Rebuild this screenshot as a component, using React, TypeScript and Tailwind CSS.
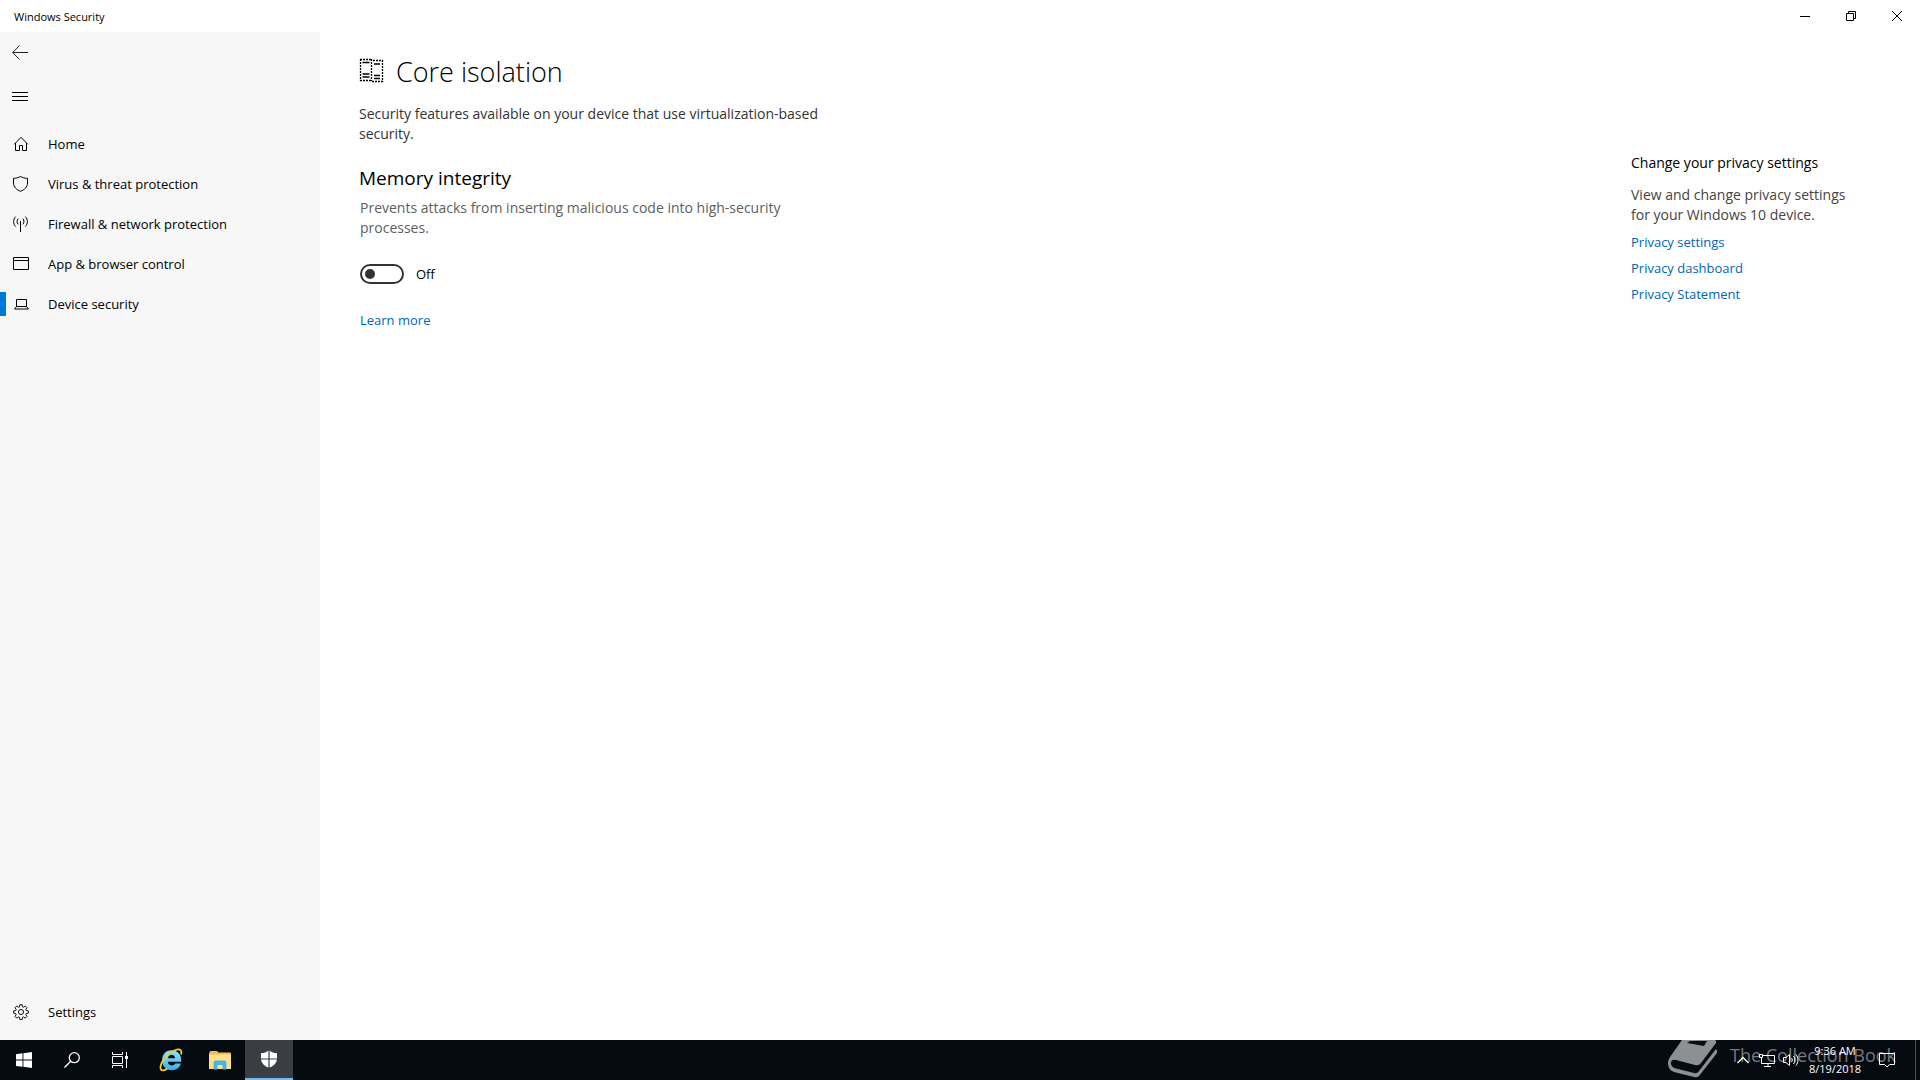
import React, { useState } from "react";

function BackIcon() {
  return (
    <svg width="16" height="16" viewBox="0 0 16 16" fill="none" stroke="#222" aria-hidden="true">
      <path d="M16 8.500H.8M7.500 1.500L.7 8.500l6.800 7" />
    </svg>
  );
}

function MenuIcon() {
  return (
    <svg width="16" height="16" viewBox="0 0 16 16" fill="#000" shapeRendering="crispEdges" aria-hidden="true">
      <path d="M0 4h16v1H0zM0 8h16v1H0zM0 12h16v1H0z" />
    </svg>
  );
}

function HomeIcon() {
  return (
    <svg width="16" height="16" viewBox="0 0 16 16" fill="none" stroke="#000" aria-hidden="true">
      <path d="M1.200 8.300L8 1.400l6.800 6.900M2.500 7.200v7.300h4v-5h3v5h4V7.200" />
    </svg>
  );
}

function ShieldIcon() {
  return (
    <svg width="16" height="16" viewBox="0 0 16 16" fill="none" stroke="#000" aria-hidden="true">
      <path d="M.5 2.300C3.500 2.300 5.500 1.500 7.500.5c2 1 4 1.800 7 1.800V7c0 4-3 6.800-7 8.300C3.500 13.800.5 11 .5 7z" />
    </svg>
  );
}

function SignalIcon() {
  return (
    <svg width="16" height="16" viewBox="0 0 16 16" fill="none" stroke="#000" aria-hidden="true">
      <path d="M7.500 5v11" />
      <path d="M5.200 2.600c-1.500 1.600-1.500 4.200 0 5.800M9.800 2.600c1.500 1.600 1.500 4.200 0 5.800M2.700.6c-2.800 2.800-2.800 7.200 0 10M12.300.6c2.800 2.800 2.800 7.200 0 10" />
    </svg>
  );
}

function WindowIcon() {
  return (
    <svg width="16" height="16" viewBox="0 0 16 16" fill="none" stroke="#000" aria-hidden="true">
      <path d="M.5 1.500h15v12H.5zM.5 4.500h15" />
    </svg>
  );
}

function LaptopIcon() {
  return (
    <svg width="16" height="16" viewBox="0 0 16 16" fill="none" stroke="#000" aria-hidden="true">
      <path d="M3.500 10.500v-7h10v7M3.500 10.500h10l2 2.500H1.500z" />
    </svg>
  );
}

function GearIcon() {
  return (
    <svg width="16" height="16" viewBox="0 0 17 17" fill="none" stroke="#000" strokeLinejoin="round" aria-hidden="true">
      <path d="M7.200.8h2.600l.3 2.200 1.200.5 1.800-1.300 1.800 1.800-1.300 1.800.5 1.200 2.200.3v2.500l-2.200.4-.5 1.200 1.300 1.800-1.800 1.800-1.800-1.300-1.200.5-.3 2.200H7.200l-.3-2.200-1.200-.5L3.900 15 2.100 13.200l1.300-1.800-.5-1.200L.7 9.800V7.300L2.900 7l.5-1.200L2.100 4l1.800-1.800 1.800 1.300L6.900 3z" />
      <circle cx="8.500" cy="8.500" r="2.700" />
    </svg>
  );
}

function CoreIsolationIcon() {
  return (
    <svg width="25" height="25" viewBox="0 0 25 25" fill="none" stroke="#000" className="mb-1 shrink-0" aria-hidden="true">
      <g strokeWidth="1.300" strokeDasharray="2 1">
        <path d="M1 1.500h12M1 22.500h12M1.500 1v22M12.500 1v22" />
        <path d="M14 2.500h10M13 23.500h11M23.500 2v22" />
      </g>
      <path d="M3.500 4.500h7M3.500 16h7M3.500 19h7M15 6h6M15 17.500h6M15 20.500h6" strokeWidth="1.600" />
    </svg>
  );
}

function StartIcon() {
  return (
    <svg width="16" height="16" viewBox="0 0 16 16" fill="#fff" aria-hidden="true">
      <path d="M0 2.200l6.500-.9v6.300H0zM7.400 1.200L16 0v7.600H7.400zM0 8.500h6.500v6.300L0 13.900zM7.400 8.500H16V16l-8.600-1.200z" />
    </svg>
  );
}

function SearchIcon() {
  return (
    <svg width="16" height="16" viewBox="0 0 16 16" fill="none" stroke="#fff" strokeWidth="1.300" aria-hidden="true">
      <circle cx="10.300" cy="5.700" r="5" />
      <path d="M6.700 9.300L.5 15.500" />
    </svg>
  );
}

function TaskViewIcon() {
  return (
    <svg width="16" height="16" viewBox="0 0 16 16" fill="none" stroke="#fff" aria-hidden="true">
      <path d="M.5 0v2.500h10V0M.5 16v-2.500h10V16M.5 4.500h10v7H.5zM14.500 0v16" />
      <path d="M13 4h3v3h-3z" fill="#fff" stroke="none" />
    </svg>
  );
}

function InternetExplorerIcon() {
  return (
    <svg width="24" height="24" viewBox="0 0 24 24" fill="none" aria-hidden="true">
      <defs>
        <linearGradient id="ie-blue" x1="0" y1="0" x2="0" y2="1">
          <stop offset="0" stopColor="#8fe3fb" />
          <stop offset="1" stopColor="#35b3ea" />
        </linearGradient>
      </defs>
      <path
        fillRule="evenodd"
        fill="url(#ie-blue)"
        d="M12.500 2.200c6 0 9.700 4.300 9.700 10v1.600H8.900c.3 2.500 1.700 3.700 3.900 3.700 1.700 0 2.800-.6 3.400-1.900h5.700c-1.200 4.100-4.600 6.700-9.200 6.700C7 22.300 3.100 18.300 3.100 12.300S7 2.200 12.500 2.200zM9 10.300h7.100c-.3-2.200-1.500-3.500-3.500-3.500S9.300 8.100 9 10.300z"
      />
      <path d="M22 6.500C23.300 2.700 21.400.8 17.800 1.600 12.500 2.800 5.500 9 2.800 14.600.6 19.200 1.200 22.800 4.300 22.400c1.300-.2 2.600-.8 4-1.700" stroke="#f3cd2c" strokeWidth="1.800" />
    </svg>
  );
}

function FolderIcon() {
  return (
    <svg width="22" height="20" viewBox="0 0 22 20" aria-hidden="true">
      <path d="M0 2.500h1V1h7l1.500 1.500H21a1 1 0 011 1V18H0z" fill="#efbf55" />
      <path d="M0 4.500h22V19H0z" fill="#fde08c" />
      <path d="M4.500 19.500v-7l1.500-2h10l1.500 2v7h-4V15h-5v4.500z" fill="#4db2dc" />
    </svg>
  );
}

function DefenderIcon() {
  return (
    <svg width="18" height="18" viewBox="0 0 18 18" fill="#fff" aria-hidden="true">
      <path d="M8.400.5v7.900H1V3.200C4 3.200 6.500 2.200 8.400.5zM9.600.5C11.500 2.200 14 3.200 17 3.200v5.200H9.600zM1.100 9.600h7.300v8C4.500 16.200 1.600 13.400 1.100 9.600zM9.600 9.600h7.300c-.5 3.800-3.400 6.600-7.300 8z" />
    </svg>
  );
}

type NavItem = { label: string; icon: () => React.ReactElement; active?: boolean };

const navItems: NavItem[] = [
  { label: "Home", icon: HomeIcon },
  { label: "Virus & threat protection", icon: ShieldIcon },
  { label: "Firewall & network protection", icon: SignalIcon },
  { label: "App & browser control", icon: WindowIcon },
  { label: "Device security", icon: LaptopIcon, active: true },
];

function NavButton({ label, icon: Icon, active }: NavItem) {
  return (
    <button
      type="button"
      aria-current={active ? "page" : undefined}
      className="flex h-10 w-full items-center text-left text-[13px] hover:bg-black/5"
    >
      <span className={active ? "h-6 w-1.5 bg-[#0078d7]" : "h-6 w-1.5"} />
      <span className="ml-1.5 flex w-9 shrink-0 items-center pl-px">
        <Icon />
      </span>
      <span className="pt-0.5">{label}</span>
    </button>
  );
}

function TitleBar() {
  return (
    <header className="flex h-8 items-center justify-between bg-white">
      <span className="pt-0.5 pl-3.5 text-[11px]">Windows Security</span>
      <div className="flex h-full">
        <button type="button" aria-label="Minimize" className="flex w-[46px] items-center justify-center">
          <svg width="10" height="10" viewBox="0 0 10 10" stroke="#000" fill="none"><path d="M0 5.500h10" /></svg>
        </button>
        <button type="button" aria-label="Restore" className="flex w-[46px] items-center justify-center">
          <svg width="10" height="10" viewBox="0 0 10 10" stroke="#000" fill="none"><path d="M.5 2.500h7v7h-7zM2.500 2.500v-2h7v7h-2" /></svg>
        </button>
        <button type="button" aria-label="Close" className="flex w-[46px] items-center justify-center">
          <svg width="10" height="10" viewBox="0 0 10 10" stroke="#000" fill="none"><path d="M0 0l10 10M10 0L0 10" /></svg>
        </button>
      </div>
    </header>
  );
}

function Sidebar() {
  return (
    <aside className="flex w-80 shrink-0 flex-col bg-[#f7f7f7] pb-2">
      <button type="button" aria-label="Back" className="flex h-10 w-12 items-center pl-3">
        <BackIcon />
      </button>
      <button type="button" aria-label="Navigation menu" className="mt-1 flex h-10 w-12 items-center pl-3">
        <MenuIcon />
      </button>
      <nav className="mt-2 flex flex-col">
        {navItems.map((item) => (
          <NavButton key={item.label} {...item} />
        ))}
      </nav>
      <div className="mt-auto">
        <NavButton label="Settings" icon={GearIcon} />
      </div>
    </aside>
  );
}

function Content() {
  const [on, setOn] = useState(false);
  return (
    <main className="flex flex-1 justify-between bg-white pr-16 pl-[39px]">
      <section className="w-[480px]">
        <h1 className="mt-5 flex items-center gap-3 text-[27px] leading-10 font-light">
          <CoreIsolationIcon />
          Core isolation
        </h1>
        <p className="mt-3 text-sm leading-5 text-[#333]">
          Security features available on your device that use virtualization-based security.
        </p>
        <h2 className="mt-5 text-[19px] leading-7">Memory integrity</h2>
        <p className="mt-1.5 pl-px text-sm leading-5 text-[#606060]">
          Prevents attacks from inserting malicious code into high-security processes.
        </p>
        <label className="mt-[26px] flex h-5 w-fit items-center gap-3 pl-px text-[13px]">
          <input
            type="checkbox"
            role="switch"
            aria-label="Memory integrity"
            checked={on}
            onChange={(e) => setOn(e.target.checked)}
            className="flex h-5 w-11 appearance-none items-center rounded-full border-2 border-[#333] px-[3px] before:size-2.5 before:rounded-full before:bg-[#333] checked:justify-end"
          />
          <span className="pt-0.5">{on ? "On" : "Off"}</span>
        </label>
        <a href="#learn-more" className="mt-6 ml-px block w-fit text-[13px] leading-6 text-[#0066b4]">Learn more</a>
      </section>
      <aside className="mt-[121px] w-[225px]">
        <h3 className="text-sm leading-5">Change your privacy settings</h3>
        <p className="mt-3 text-sm leading-5 text-[#444]">View and change privacy settings for your Windows 10 device.</p>
        <ul className="mt-1 text-[13px] leading-[26px] text-[#0066b4]">
          <li><a href="#privacy-settings">Privacy settings</a></li>
          <li><a href="#privacy-dashboard">Privacy dashboard</a></li>
          <li><a href="#privacy-statement">Privacy Statement</a></li>
        </ul>
      </aside>
    </main>
  );
}

function Watermark() {
  return (
    <div className="pointer-events-none absolute inset-y-0 right-6 flex items-start gap-3 text-[#777a7e]">
      <svg width="50" height="38" viewBox="0 0 50 38" aria-hidden="true">
        <path d="M14 0h33q2 1 1 3L33 23q-2 3-6 2L8 20q-4-1-5 2t3 6l20 5q3 1 5-2L48 9q2 2 1 4L31 36q-2 2-5 1L6 32Q0 30 0 23q0-3 2-6z" fill="#8d9093" />
        <path d="M22 1h17l-3 5-17-3z" fill="#0a0d14" />
      </svg>
      <span className="text-lg leading-[30px] whitespace-nowrap">The Collection Book</span>
    </div>
  );
}

function Taskbar() {
  return (
    <footer className="relative flex h-10 justify-between bg-[#060a11] text-white">
      <Watermark />
      <div className="flex">
        <button type="button" aria-label="Start" className="flex w-12 items-center justify-center"><StartIcon /></button>
        <button type="button" aria-label="Search" className="flex w-12 items-center justify-center"><SearchIcon /></button>
        <button type="button" aria-label="Task view" className="flex w-12 items-center justify-center"><TaskViewIcon /></button>
        <div className="ml-[3px] flex gap-px">
          <button type="button" aria-label="Internet Explorer" className="flex w-12 items-center justify-center"><InternetExplorerIcon /></button>
          <button type="button" aria-label="File Explorer" className="flex w-12 items-center justify-center"><FolderIcon /></button>
          <button type="button" aria-label="Windows Security" className="flex w-12 items-center justify-center border-b-2 border-[#76b9ed] bg-[#3a3d42]"><DefenderIcon /></button>
        </div>
      </div>
      <div className="relative flex items-stretch">
        <button type="button" aria-label="Show hidden icons" className="flex w-6 items-center justify-center">
          <svg width="12" height="8" viewBox="0 0 12 8" fill="none" stroke="#fff" strokeWidth="1.300"><path d="M.5 7L6 1.500 11.500 7" /></svg>
        </button>
        <button type="button" aria-label="Network" className="flex w-6 items-center justify-center">
          <svg width="16" height="16" viewBox="0 0 16 16" fill="none" stroke="#fff"><path d="M4 3.500h11.500v8H2.500V6M.5 2.500h3v3h-3zM9 11.500v3M5 14.500h7" /></svg>
        </button>
        <button type="button" aria-label="Volume" className="flex w-6 items-center justify-center">
          <svg width="16" height="16" viewBox="0 0 16 16" fill="none" stroke="#fff"><path d="M.5 5.500h2.500l3.500-3v11l-3.500-3H.5zM8.500 6c1 1.200 1 2.800 0 4M10.500 4c2 2.200 2 5.800 0 8M12.700 2.300c3 3.200 3 8.200 0 11.400" /></svg>
        </button>
        <button type="button" className="flex w-14 flex-col items-center justify-center pl-2 text-[11px] leading-[18px] whitespace-nowrap">
          <time>9:36 AM</time>
          <time>8/19/2018</time>
        </button>
        <button type="button" aria-label="Notifications" className="flex w-14 items-center justify-center">
          <svg width="16" height="16" viewBox="0 0 16 16" fill="none" stroke="#fff"><path d="M.5 1.500h15v11h-5L8 15l-2.500-2.500h-5z" /></svg>
        </button>
        <button type="button" aria-label="Show desktop" className="w-[5px] border-l border-[#4a4d52]" />
      </div>
    </footer>
  );
}

export default function App() {
  return (
    <div className="flex min-h-screen flex-col bg-white font-['Open_Sans','Noto_Sans',sans-serif] text-black">
      <TitleBar />
      <div className="flex flex-1">
        <Sidebar />
        <Content />
      </div>
      <Taskbar />
    </div>
  );
}
